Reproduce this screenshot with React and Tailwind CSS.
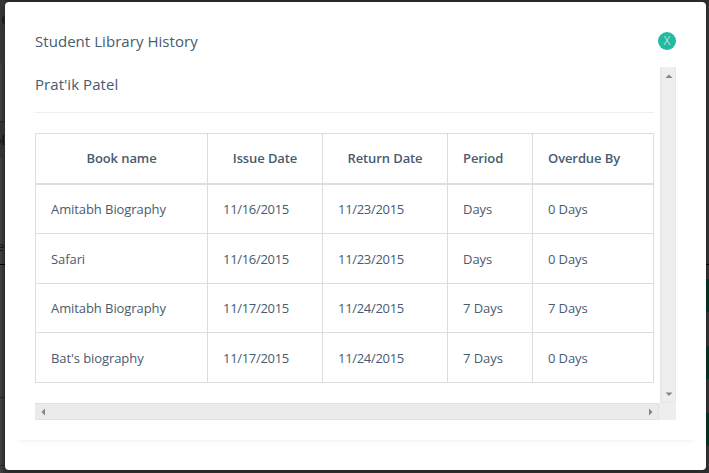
const rows = [
  { h: 'h-[49px]', cells: ['Amitabh Biography', '11/16/2015', '11/23/2015', 'Days', '0 Days'] },
  { h: 'h-[50px]', cells: ['Safari', '11/16/2015', '11/23/2015', 'Days', '0 Days'] },
  { h: 'h-[49px]', cells: ['Amitabh Biography', '11/17/2015', '11/24/2015', '7 Days', '7 Days'] },
  { h: 'h-[50px]', cells: ["Bat's biography", '11/17/2015', '11/24/2015', '7 Days', '0 Days'] },
];

const tracking = [
  'tracking-[-0.08px]',
  'tracking-[-0.3px]',
  'tracking-[-0.3px]',
  'tracking-[-0.05px]',
  'tracking-[-0.1px]',
];

const columns = [
  { label: 'Book name', align: 'text-center' },
  { label: 'Issue Date', align: 'text-center' },
  { label: 'Return Date', align: 'text-center' },
  { label: 'Period', align: 'text-left' },
  { label: 'Overdue By', align: 'text-left' },
];

function Arrow({ points }) {
  return (
    <svg viewBox="0 0 8 8" className="size-2 shrink-0" fill="#858585">
      <polygon points={points} />
    </svg>
  );
}

function HistoryTable() {
  return (
    <table className="w-[619px] table-fixed border-separate border-spacing-0 border-t border-l border-[#dddddd] text-[13px] leading-[18px]">
      <colgroup>
        <col className="w-[172px]" />
        <col className="w-[115px]" />
        <col className="w-[125px]" />
        <col className="w-[85px]" />
        <col className="w-[121px]" />
      </colgroup>
      <thead>
        <tr className="h-[51px]">
          {columns.map((c) => (
            <th key={c.label} className={`border-r border-b-2 border-[#dddddd] px-[15px] pt-0 pb-[2px] font-semibold tracking-[-0.1px] whitespace-nowrap ${c.align}`}>
              {c.label}
            </th>
          ))}
        </tr>
      </thead>
      <tbody>
        {rows.map((r, i) => (
          <tr key={i} className={r.h}>
            {r.cells.map((cell, j) => (
              <td key={j} className={`border-r border-b border-[#dddddd] px-[15px] py-0 whitespace-nowrap ${tracking[j]}`}>
                {cell}
              </td>
            ))}
          </tr>
        ))}
      </tbody>
    </table>
  );
}

function LeftBackdrop() {
  return (
    <div className="h-full w-[5px] shrink-0 overflow-hidden bg-linear-to-r from-[#424242] to-[#303030] text-[13px] leading-[18px] text-[#11151b]">
      <div className="h-[63px] overflow-hidden bg-[#343638] pt-[9px] text-[18px] text-[#1a1a1a]">
        <span className="ml-[1px]">e</span>
      </div>
      <div className="h-[59px] border-b border-[#262626]" />
      <div className="flex h-[36px] items-center justify-end overflow-hidden bg-[#343434] text-[13px] font-semibold">ol</div>
      <div className="flex h-[107px] items-end justify-end overflow-hidden border-b border-black pr-[1px] pb-[9px]">e</div>
      <div className="h-[133px] border-b border-[#262626]" />
      <div className="h-[68px] border-b border-[#262626]" />
    </div>
  );
}

function RightBackdrop() {
  return (
    <div className="flex h-full w-[3px] shrink-0 flex-col bg-linear-to-r from-[#262626] to-[#383838]">
      <div className="h-[265px] border-b border-black" />
      <div className="mt-[14px] h-[33px] bg-[#03301f]" />
      <div className="mt-[34px] h-[33px] bg-[#03301f]" />
      <div className="mt-[34px] h-[33px] bg-[#03301f]" />
    </div>
  );
}

export default function App() {
  return (
    <div className="flex h-[473px] w-[709px] overflow-hidden bg-[#2e2e2e] font-['Open_Sans',sans-serif] text-[#485b6f]">
      <LeftBackdrop />
      <div className="mt-[2px] h-[468px] w-[701px] shrink-0 rounded-[4px] bg-white px-[9px] shadow-[0_0_4px_rgba(0,0,0,0.3)]">
        <div className="h-[438px] rounded-[3px] px-[21px] shadow-[0_5px_5px_-5px_rgba(0,0,0,0.1)]">
          <header className="flex h-[65px] w-[641px] justify-between pt-[30px]">
            <h1 className="-mt-px text-[15px] leading-5 font-medium tracking-[0.05px]">Student Library History</h1>
            <button className="flex size-[18px] items-center justify-center rounded-full bg-[#22baa0] text-[12px] leading-none font-light text-white/90">
              X
            </button>
          </header>
          <div className="flex h-[336px] w-[641px]">
            <div className="h-full w-[625px]">
              <div className="mb-[20px] h-[46px] w-[619px] border-b border-[#eeeeee] pt-[7px]">
                <h2 className="text-[15px] leading-5 font-medium tracking-[0.05px]">Prat'ik Patel</h2>
              </div>
              <HistoryTable />
            </div>
            <div className="flex w-[16px] flex-col items-center justify-between border-r border-b border-l-2 border-[#e7e7e7] bg-[#eeeeee] pt-[5px] pb-[4px]">
              <Arrow points="0.5,6 4,2.5 7.5,6" />
              <Arrow points="0.5,2.5 7.5,2.5 4,6" />
            </div>
          </div>
          <div className="flex h-[17px] w-[641px] bg-[#eeeeee]">
            <div className="flex w-[624px] items-center justify-between border-t border-r border-b border-[#e2e2e2] bg-[#ebebeb] pr-[3px] pl-[4px]">
              <Arrow points="6,0.5 6,7.5 2.5,4" />
              <Arrow points="2,0.5 5.5,4 2,7.5" />
            </div>
          </div>
        </div>
      </div>
      <RightBackdrop />
    </div>
  );
}
